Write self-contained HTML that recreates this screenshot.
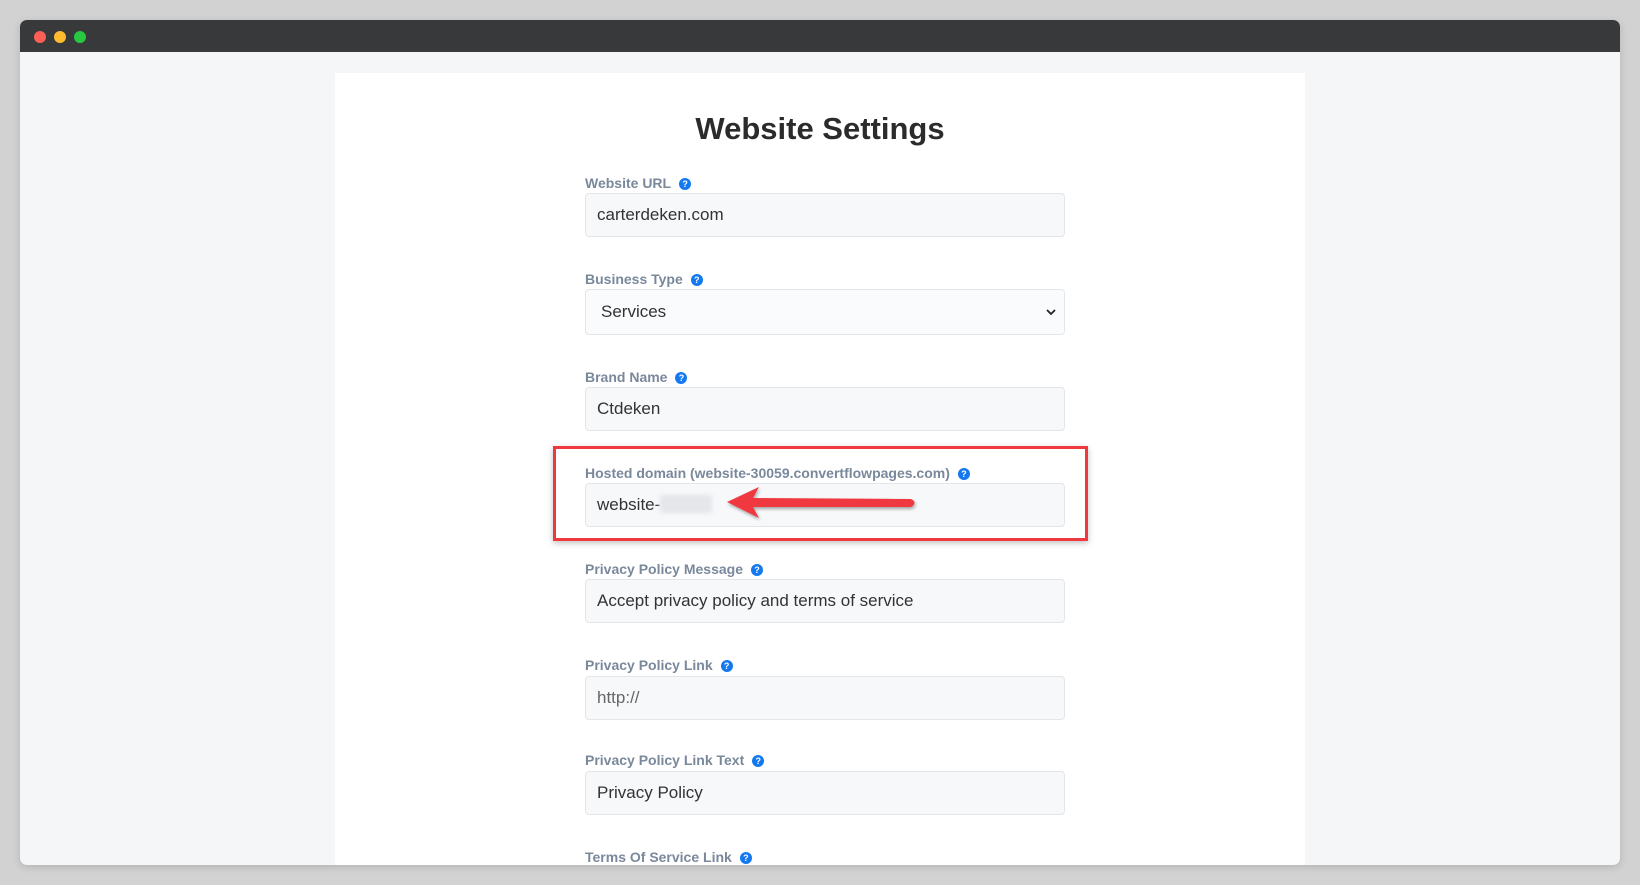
<!DOCTYPE html>
<html><head><meta charset="utf-8"><style>
*{box-sizing:border-box;margin:0;padding:0}
body{width:1640px;height:885px;background:#d2d2d2;font-family:"Liberation Sans",Arial,sans-serif;position:relative;overflow:hidden}
.win{position:absolute;left:20px;top:20px;width:1600px;height:845px;background:#f5f6f8;border-radius:7px;overflow:hidden;box-shadow:0 2px 8px rgba(0,0,0,.15)}
.bar{height:32px;background:#38393b;position:relative}
.dot{position:absolute;top:11px;width:12px;height:12px;border-radius:50%}
.card{position:absolute;left:315px;top:53px;width:970px;height:800px;background:#fff}
h1{position:absolute;left:0;right:0;top:38px;text-align:center;font-size:31px;font-weight:bold;color:#2b2b2b}
.lab{position:absolute;left:250px;font-size:14px;font-weight:bold;color:#7a889c;white-space:nowrap}
.q{display:inline-block;width:12px;height:12px;border-radius:50%;background:#1479f0;color:#fff;font-size:9px;line-height:12px;text-align:center;margin-left:8px;vertical-align:1px}
.in{position:absolute;left:250px;width:480px;height:44px;background:#f7f8fa;border:1px solid #e2e5ea;border-radius:4px;font-size:17px;color:#333;padding:0 11px;line-height:42px}
</style></head><body>
<div class="win">
<div class="bar"><div class="dot" style="left:14px;background:#fe5f57"></div><div class="dot" style="left:34px;background:#febc2e"></div><div class="dot" style="left:54px;background:#28c840"></div></div>
<div class="card">
<h1>Website Settings</h1>
<div class="lab" style="top:102px">Website URL<span class="q">?</span></div>
<div class="in" style="top:120px">carterdeken.com</div>
<div class="lab" style="top:198px">Business Type<span class="q">?</span></div>
<div class="in" style="top:216px;height:46px;line-height:44px;background:#fafbfc;padding-left:15px">Services<svg style="position:absolute;right:8px;top:18px" width="10" height="8"><path d="M1 2 L5 6 L9 2" stroke="#222" stroke-width="1.8" fill="none"/></svg></div>
<div class="lab" style="top:296px">Brand Name<span class="q">?</span></div>
<div class="in" style="top:314px">Ctdeken</div>
<div class="lab" style="top:392px">Hosted domain (website-30059.convertflowpages.com)<span class="q">?</span></div>
<div class="in" style="top:410px">website-<span style="display:inline-block;width:52px;height:18px;background:#e4e6ea;vertical-align:-3px;filter:blur(2px)"></span></div>
<div class="lab" style="top:488px">Privacy Policy Message<span class="q">?</span></div>
<div class="in" style="top:506px">Accept privacy policy and terms of service</div>
<div class="lab" style="top:584px">Privacy Policy Link<span class="q">?</span></div>
<div class="in" style="top:603px;color:#666">http://</div>
<div class="lab" style="top:679px">Privacy Policy Link Text<span class="q">?</span></div>
<div class="in" style="top:698px">Privacy Policy</div>
<div class="lab" style="top:776px">Terms Of Service Link<span class="q">?</span></div>
<div style="position:absolute;left:218px;top:373px;width:535px;height:95px;border:3px solid #f0393f;box-shadow:0 2px 6px rgba(0,0,0,.25)"></div>
<svg style="position:absolute;left:386px;top:408px" width="205" height="42"><defs><filter id="s"><feDropShadow dx="1" dy="2" stdDeviation="1.5" flood-opacity=".35"/></filter></defs><g filter="url(#s)" fill="#f0393f"><path d="M6 21 L38 6 L32 17 L190 18 Q197 21.5 190 26 L32 26 L38 37 Z"/></g></svg>
</div>
</div>
</body></html>
